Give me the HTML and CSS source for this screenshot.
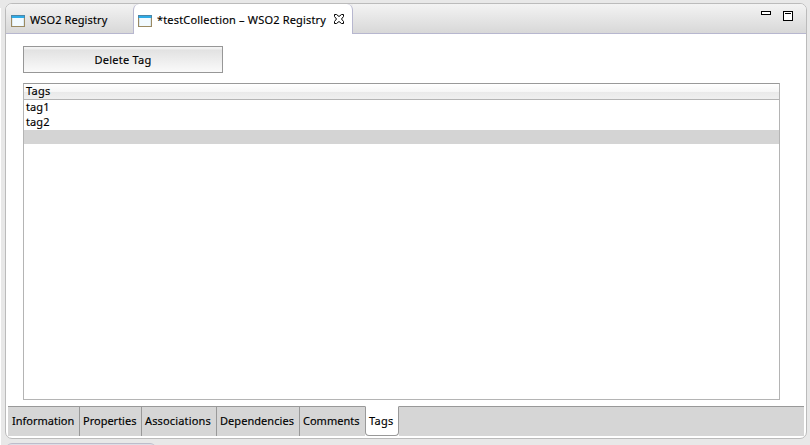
FILE: index.html
```
<!DOCTYPE html>
<html lang="en">
<head>
<meta charset="utf-8">
<title>testCollection - WSO2 Registry</title>
<link rel="stylesheet" href="styles.css">
</head>
<body>
<div class="edge"></div>
<div class="editor">
  <header class="tabbar">
    <div class="tab tab-inactive">
      <svg class="file-icon" width="14" height="12" viewBox="0 0 14 12"><rect x=".5" y=".5" width="13" height="11" fill="#f2faff" stroke="#9b8a62"/><path d="M1 1h12v2H1z" fill="#2fabe6"/><path d="M0 .5h14M.5 0v3M13.500 0v3" stroke="#4a86a8"/><path d="M1.500 3v8M12.500 3v8" stroke="#dce9f0"/></svg>
      <span class="label l-reg">WSO2 Registry</span>
    </div>
    <div class="tab tab-active">
      <svg class="file-icon" width="14" height="12" viewBox="0 0 14 12"><rect x=".5" y=".5" width="13" height="11" fill="#f2faff" stroke="#9b8a62"/><path d="M1 1h12v2H1z" fill="#2fabe6"/><path d="M0 .5h14M.5 0v3M13.500 0v3" stroke="#4a86a8"/><path d="M1.500 3v8M12.500 3v8" stroke="#dce9f0"/></svg>
      <span class="label l-test">*testCollection – WSO2 Registry</span>
      <svg class="close" width="10" height="10" viewBox="0 0 10 10"><path d="M.5.5h2l2.500 2 2.500-2h2v2L7.500 5l2 2.500v2h-2L5 7.500l-2.500 2h-2v-2L2.500 5l-2-2.500z" fill="#fff" stroke="#000"/></svg>
    </div>
    <div class="tab-rest">
      <svg class="controls" width="32" height="10" viewBox="0 0 32 10"><rect x=".5" y=".5" width="9" height="3" fill="#fff" stroke="#000"/><rect x="22.500" y=".5" width="9" height="9" fill="#fff" stroke="#000"/><path d="M24 2.500h6" stroke="#000"/></svg>
    </div>
  </header>
  <main class="content">
    <button class="delete"><span class="l-del">Delete Tag</span></button>
    <div class="table">
      <div class="thead">Tags</div>
      <div class="row">tag1</div>
      <div class="row">tag2</div>
      <div class="row selected"></div>
    </div>
  </main>
  <nav class="pages">
    <div class="page p1">Information</div>
    <div class="page p2">Properties</div>
    <div class="page p3">Associations</div>
    <div class="page p4">Dependencies</div>
    <div class="page p5">Comments</div>
    <div class="page p6">Tags</div>
    <div class="page-rest"></div>
  </nav>
</div>
<div class="next-panel"></div>
</body>
</html>
```
FILE: styles.css
```
* { box-sizing: border-box; }
body {
  margin: 0;
  width: 810px;
  height: 445px;
  overflow: hidden;
  background: #e8e8e8;
  color: #000;
  font: 11px/15px "Noto Sans", "Open Sans", sans-serif;
  -webkit-text-stroke: .15px #000;
  white-space: nowrap;
  padding: 3px 3px 0 5px;
}
.edge { position: absolute; left: 0; top: 8px; width: 1px; height: 437px; background: #fff; }
.editor {
  width: 802px;
  height: 436px;
  border: 1px solid #bbb;
  border-radius: 7px;
  background: #fff;
  overflow: hidden;
  display: flex;
  flex-direction: column;
}
.tabbar { height: 30px; display: flex; flex: none; }
.tab { display: flex; align-items: flex-start; flex: none; }
.tab-inactive, .tab-rest {
  background: linear-gradient(#f3f3f3, #d8d8d8);
  border-bottom: 1px solid #b7b7cf;
}
.tab-inactive { width: 127px; padding-left: 5px; }
.tab-active {
  width: 220px;
  padding-left: 4px;
  border: 1px solid #b7b7cf;
  border-width: 0 1px;
  border-radius: 6px 6px 0 0;
  background: #fff;
  box-shadow: 0 -6px 0 #eee;
}
.tab-rest { flex: 1; display: flex; justify-content: flex-end; padding: 7px 13px 0 0; }
.file-icon { margin: 11px 5px 0 0; flex: none; }
.label { margin-top: 8px; flex: none; }
.l-reg { letter-spacing: .1px; }
.l-test { width: 170px; letter-spacing: .17px; }
.close { margin: 10px 0 0 7px; flex: none; }
.content { height: 372px; flex: none; padding: 12px 0 0 17px; }
.delete {
  display: block;
  width: 200px;
  height: 27px;
  margin: 0 0 10px;
  padding: 0;
  border: 1px solid #979797;
  background: linear-gradient(#f4f4f4 0, #f0f0f0 2px, #e2e2e2 3px, #fafafa 100%);
  font: inherit;
  letter-spacing: .25px;
  color: inherit;
}
.table { width: 757px; height: 317px; border: 1px solid #b4b4b4; border-top-color: #999; }
.thead {
  height: 16px;
  padding-left: 2px;
  border-bottom: 1px solid #b4b4b4;
  background: linear-gradient(#fff 0, #f6f6f6 50%, #e9e9e9 51%, #efefef 100%);
  line-height: 14px;
  letter-spacing: .3px;
}
.row { height: 15px; padding-left: 2px; line-height: 13px; letter-spacing: .1px; }
.selected { height: 14px; background: #d4d4d4; }
.pages { height: 30px; display: flex; margin: 0 2px; flex: none; }
.page, .page-rest { background: #d6d6d6; border-top: 1px solid #999; height: 30px; }
.page { padding: 6px 0 0 3px; border-right: 1px solid #999; flex: none; }
.page-rest { flex: 1; }
.p1 { width: 72px; padding-left: 4px; }
.p2 { width: 62px; }
.p3 { width: 75px; letter-spacing: .15px; }
.p4 { width: 83px; letter-spacing: .05px; }
.p5 { width: 65px; border-right: 0; }
.p6 {
  width: 34px;
  background: #fff;
  border: 1px solid #999;
  border-top-color: #fff;
  border-radius: 0 0 4px 4px;
  letter-spacing: .3px;
}
.next-panel {
  width: 150px;
  height: 6px;
  margin: 4px 0 0 1px;
  border-top: 1px solid #bdbdcb;
  border-radius: 7px 7px 0 0;
  background: #dedee6;
}
```
